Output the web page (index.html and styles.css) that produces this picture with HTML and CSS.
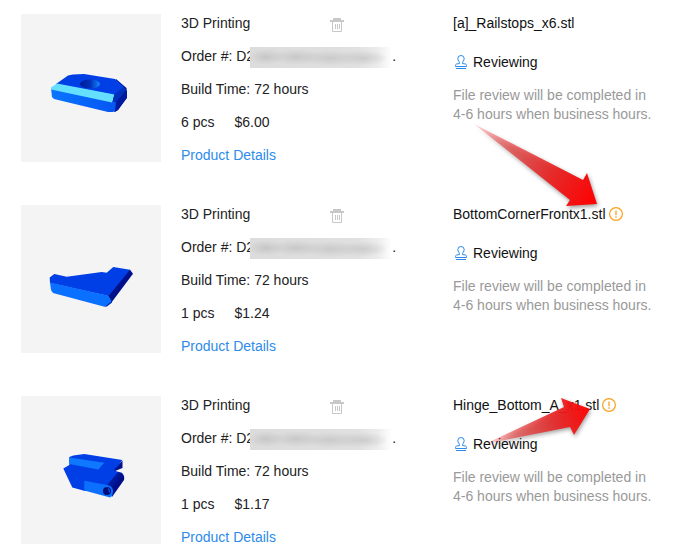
FILE: index.html
```html
<!DOCTYPE html>
<html lang="en">
<head>
<meta charset="utf-8">
<title>Orders</title>
<link rel="stylesheet" href="styles.css">
</head>
<body>
<svg class="defs" aria-hidden="true">
  <defs>
    <symbol id="trash" viewBox="0 0 14 14">
      <path fill="none" stroke="#c8c8c8" d="M2.500 4v9.500h9V4M5.500 6v5M7.500 6v5M9.500 6v5"/>
      <path fill="#c8c8c8" d="M3 0h8v2h3v2H0V2h3z"/>
    </symbol>
    <symbol id="stamp" viewBox="0 0 12 14">
      <path fill="none" stroke="#2e8bea" d="M4.500 8.500C4.800 6.500 2.800 5.800 2.800 3.600a3.200 3.100 0 0 1 6.400 0C9.200 5.800 7.200 6.500 7.500 8.500L10.500 9q1 .3 1 1.500v1H.5v-1Q.5 9.300 1.500 9zM1 13.500h10"/>
    </symbol>
    <symbol id="warn" viewBox="0 0 14 14">
      <circle cx="7" cy="7" r="6.400" fill="none" stroke="#f9a01b" stroke-width="1.200"/>
      <path fill="none" stroke="#f9a01b" stroke-width="1.300" d="M7 3.500v4.700M7 9.300v1.400"/>
    </symbol>
  </defs>
</svg>
<main class="orders">
  <article class="order">
    <div class="thumb">
      <svg viewBox="0 0 140 148" role="img" aria-label="Rail stop model">
        <defs>
          <linearGradient id="face" x2="1"><stop offset="0" stop-color="#0875ff"/><stop offset="1" stop-color="#0755f2"/></linearGradient>
          <linearGradient id="hole" x2="1"><stop offset="0" stop-color="#001a9a"/><stop offset=".5" stop-color="#0030b8"/><stop offset="1" stop-color="#1686ff"/></linearGradient>
        </defs>
        <path fill="#00138e" d="M95 65l10.500 9 .5 9-9 13-4 2-2-17z"/>
        <path fill="#003fe6" d="M47 61.500l5-1 11-.5 31 5 9 8-10 8-58-11z"/>
        <path fill="url(#face)" d="M30 74l62 13 4 1-1 8-3 2h-5L33 85l-2-2z"/>
        <path fill="#64dfff" d="M36 69.500l57.500 11-2.500 8-61-13v-2z"/>
        <path fill="#0031bd" d="M93.500 80.500l9-7.500 3 3-10 12-4 0z"/>
        <path fill="#001a9e" d="M95 88l11-12v8l-9 12-3 2z"/>
        <ellipse cx="69" cy="70" rx="10" ry="4.500" fill="url(#hole)"/>
      </svg>
    </div>
    <div class="details">
      <div class="head"><span>3D Printing</span><button class="remove" aria-label="Delete"><svg><use href="#trash"/></svg></button></div>
      <div class="number">Order #: D2<span class="redacted"></span>.</div>
      <div>Build Time: 72 hours</div>
      <div class="amount"><span>6 pcs</span><span>$6.00</span></div>
      <a href="#">Product Details</a>
    </div>
    <div class="file">
      <div class="name">[a]_Railstops_x6.stl</div>
      <div class="status"><svg><use href="#stamp"/></svg>Reviewing</div>
      <p class="note">File review will be completed in<br>4-6 hours when business hours.</p>
    </div>
  </article>
  <article class="order">
    <div class="thumb">
      <svg viewBox="0 0 140 148" role="img" aria-label="Bottom corner model">
        <path fill="#00108b" d="M86 90l22-25 1-.3 3 4-21 28-3 2z"/>
        <path fill="#003fe6" d="M28.700 72.500l4.600-3.500 12.400 2.700 35-4.700 5 .7 6.600-5.700L109 64.700 87.500 91 29 78z"/>
        <path fill="#0970ff" d="M29 77.500l58.500 13.200L91 97l-7.500 4.700L32 88l-2-3z"/>
        <path fill="#0026a9" d="M83.500 101.700L91 96v1.500l-5 4z"/>
      </svg>
    </div>
    <div class="details">
      <div class="head"><span>3D Printing</span><button class="remove" aria-label="Delete"><svg><use href="#trash"/></svg></button></div>
      <div class="number">Order #: D2<span class="redacted"></span>.</div>
      <div>Build Time: 72 hours</div>
      <div class="amount"><span>1 pcs</span><span>$1.24</span></div>
      <a href="#">Product Details</a>
    </div>
    <div class="file">
      <div class="name">BottomCornerFrontx1.stl<svg><use href="#warn"/></svg></div>
      <div class="status"><svg><use href="#stamp"/></svg>Reviewing</div>
      <p class="note">File review will be completed in<br>4-6 hours when business hours.</p>
    </div>
    <svg class="arrow arrow-down" viewBox="0 0 140 100" aria-hidden="true">
      <defs><linearGradient id="fade-down" gradientUnits="userSpaceOnUse" x1="4" y1="4" x2="127" y2="84"><stop offset="0" stop-color="#ff2020" stop-opacity=".15"/><stop offset=".3" stop-color="#e83a3a" stop-opacity=".7"/><stop offset=".65" stop-color="#e62828"/><stop offset="1" stop-color="#ff0000"/></linearGradient></defs>
      <path fill="url(#fade-down)" d="M4 4l109 56 4-7 10 31-31 2 4-6z"/>
    </svg>
  </article>
  <article class="order">
    <div class="thumb">
      <svg viewBox="0 0 140 148" role="img" aria-label="Hinge model">
        <defs><linearGradient id="barrel" x1="0" y1="0" x2="1" y2="1"><stop offset="0" stop-color="#0030cc"/><stop offset=".55" stop-color="#000d86"/></linearGradient></defs>
        <path fill="#003fe6" d="M48.300 61l4-1.500L63.300 58l38 6-7.300 10.700 7 2.300L91 92l-27 3-12.700-3.500-9-19 6-3.500z"/>
        <path fill="#0f78ff" d="M48.300 61.500l35 5.300-6 6.700-29-5.500z"/>
        <path fill="#00138e" d="M101.500 64.500v7.500l-7.500 3-1-1z"/>
        <path fill="url(#barrel)" d="M86 89l11-13 4 1q3 3 2 7L91 101z"/>
        <path fill="#0c70ff" d="M63.300 84.700L86 89q6 1 6 6 0 5-3 6.500L63.300 94.500z"/>
        <circle cx="86" cy="95" r="4" fill="#000d79"/>
        <path fill="#064fe2" d="M86.500 91.500a4 4 0 0 1 2 6z"/>
      </svg>
    </div>
    <div class="details">
      <div class="head"><span>3D Printing</span><button class="remove" aria-label="Delete"><svg><use href="#trash"/></svg></button></div>
      <div class="number">Order #: D2<span class="redacted"></span>.</div>
      <div>Build Time: 72 hours</div>
      <div class="amount"><span>1 pcs</span><span>$1.17</span></div>
      <a href="#">Product Details</a>
    </div>
    <div class="file">
      <div class="name">Hinge_Bottom_A_x1.stl<svg><use href="#warn"/></svg></div>
      <div class="status"><svg><use href="#stamp"/></svg>Reviewing</div>
      <p class="note">File review will be completed in<br>4-6 hours when business hours.</p>
    </div>
    <svg class="arrow arrow-up" viewBox="0 0 120 60" aria-hidden="true">
      <defs><linearGradient id="fade-up" gradientUnits="userSpaceOnUse" x1="5" y1="54" x2="110" y2="19"><stop offset="0" stop-color="#ff2020" stop-opacity=".1"/><stop offset=".3" stop-color="#e83a3a" stop-opacity=".65"/><stop offset=".65" stop-color="#e62828" stop-opacity=".92"/><stop offset="1" stop-color="#ff0000" stop-opacity=".96"/></linearGradient></defs>
      <path fill="url(#fade-up)" d="M5 54l79-37-3-9 29 11-16 26-4-8z"/>
    </svg>
  </article>
</main>
</body>
</html>
```
FILE: styles.css
```css
body {
  margin: 0;
  background: #fff;
  color: #222;
  font: 14px/19px "Liberation Sans", Arial, sans-serif;
}

.defs {
  position: absolute;
  width: 0;
  height: 0;
}

.orders {
  display: flex;
  flex-direction: column;
  gap: 43px;
  padding: 14px 21px 0;
}

.order {
  position: relative;
  display: grid;
  grid-template-columns: 140px 252px 1fr;
  align-items: start;
  gap: 20px;
  height: 148px;
}

.thumb {
  background: #f4f4f4;
}

.thumb svg {
  display: block;
  width: 140px;
  height: 148px;
}

.details {
  display: flex;
  flex-direction: column;
  gap: 14px;
}

.head {
  display: flex;
  justify-content: space-between;
  align-items: center;
  padding-right: 89px;
}

.remove {
  display: flex;
  padding: 0;
  border: 0;
  background: none;
  cursor: pointer;
}

.remove svg {
  width: 14px;
  height: 14px;
  margin-top: 2px;
}

.number {
  display: flex;
  height: 19px;
}

.redacted {
  width: 142px;
  height: 21px;
  margin-left: -4px;
  background:
    radial-gradient(ellipse 18px 8px at 16px 10px, #c6c6c6, transparent),
    radial-gradient(ellipse 26px 8px at 46px 10px, #c8c8c8, transparent),
    radial-gradient(ellipse 30px 8px at 80px 11px, #cacaca, transparent),
    radial-gradient(ellipse 26px 8px at 112px 11px, #cccccc, transparent),
    linear-gradient(90deg, #dcdcdc, #e0e0e0 75%, #ececec 90%, #ffffff);
}

.amount {
  display: flex;
  gap: 20px;
}

a {
  color: #2e8bea;
  text-decoration: none;
}

.file {
  color: #111;
}

.name {
  display: flex;
  align-items: flex-start;
  gap: 3px;
}

.name svg {
  width: 14px;
  height: 14px;
  margin-top: 2px;
}

.status {
  display: flex;
  align-items: flex-start;
  gap: 6px;
  margin-top: 20px;
  padding-left: 2px;
}

.status svg {
  width: 12px;
  height: 14px;
  margin-top: 2px;
}

.note {
  margin: 14px 0 0;
  color: #999;
}

.arrow {
  position: absolute;
  filter: drop-shadow(1px 2px 2px #00000066);
  pointer-events: none;
}

.arrow-down {
  left: 449px;
  top: -85px;
  width: 140px;
  height: 100px;
}

.arrow-up {
  left: 459px;
  top: -6px;
  width: 120px;
  height: 60px;
}
```
